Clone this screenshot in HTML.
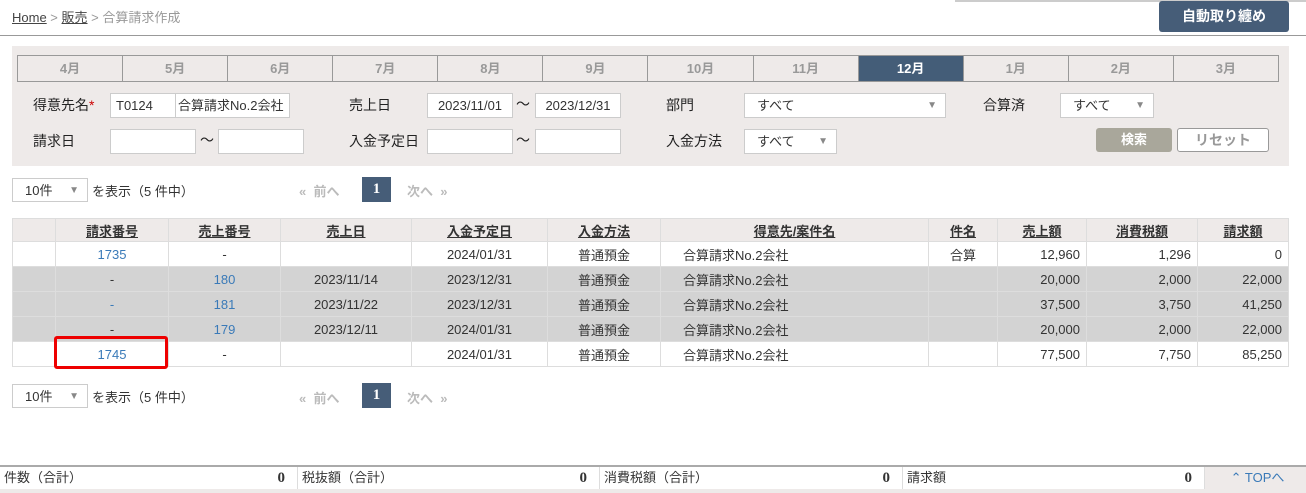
<!DOCTYPE html>
<html><head><meta charset="utf-8"><style>
*{box-sizing:border-box;margin:0;padding:0}
body{width:1306px;height:493px;overflow:hidden;background:#fff;font-family:"Liberation Sans","Noto Sans CJK JP",sans-serif;font-size:13px;color:#333;position:relative}
.a{position:absolute}
.bc{left:12px;top:7px;color:#999}
.bc u{color:#444}
.hl{left:0;top:35px;width:1306px;height:1px;background:#999}
.tl{left:955px;top:0;width:351px;height:2px;background:#ccc}
.btn1{left:1159px;top:1px;width:130px;height:31px;background:#465d78;color:#fff;border-radius:3px;font-weight:bold;font-size:14px;text-align:center;line-height:31px}
.panel{left:12px;top:46px;width:1277px;height:120px;background:#eeeae9}
.tabs{left:17px;top:55px;width:1262px;height:27px;display:flex;border:1px solid #999;background:#eeeae9}
.tabs div{flex:1;text-align:center;line-height:25px;color:#999;font-weight:bold;border-left:1px solid #999}
.tabs div:first-child{border-left:none}
.tabs .on{background:#445d78;color:#fff}
.lb{font-size:14px;color:#222}
.in{background:#fff;border:1px solid #ccc;height:25px;line-height:23px;padding-left:5px;font-size:13px}
.sel::after{content:"▼";position:absolute;right:8px;top:0;font-size:10px;color:#888}
.sel{padding-left:12px}
.b2{background:#a9a79b;color:#fff;border-radius:3px;text-align:center;font-weight:bold;line-height:24px}
.b3{background:#fff;border:1px solid #999;color:#999;border-radius:3px;text-align:center;font-weight:bold;line-height:22px;font-size:14px}
.pg span{position:absolute}
table{position:absolute;left:12px;top:218px;border-collapse:collapse;width:1277px}
td,th{border:1px solid #ddd;height:25px;font-size:13px;font-weight:normal;padding:0 6px}
th{background:#eeeae9;height:23px;text-decoration:underline;font-weight:bold;color:#333}
.c{text-align:center}.r{text-align:right}
tr.g td{background:#d3d3d3}
.lk{color:#3a7ab8}
.red{left:54px;top:336px;width:114px;height:33px;border:3px solid #e00;border-radius:3px}
.ft{left:0;top:465px;width:1306px;height:24px;border-top:2px solid #aaa;display:flex}
.ft div{position:relative;border-right:1px solid #ddd;height:22px;line-height:22px;padding-left:4px}
.ft b{position:absolute;right:12px;font-family:"Liberation Serif",serif;font-size:15px}
</style></head><body>
<div class="a tl"></div>
<div class="a bc"><u>Home</u> &gt; <u>販売</u> &gt; 合算請求作成</div>
<div class="a btn1">自動取り纏め</div>
<div class="a hl"></div>
<div class="a panel"></div>
<div class="a tabs"><div>4月</div><div>5月</div><div>6月</div><div>7月</div><div>8月</div><div>9月</div><div>10月</div><div>11月</div><div class="on">12月</div><div>1月</div><div>2月</div><div>3月</div></div>
<div class="a lb" style="left:33px;top:95px">得意先名<span style="color:#c00">*</span></div>
<div class="a in" style="left:110px;top:93px;width:66px">T0124</div>
<div class="a in" style="left:175px;top:93px;width:115px;padding-left:2px">合算請求No.2会社</div>
<div class="a lb" style="left:349px;top:95px">売上日</div>
<div class="a in c" style="left:427px;top:93px;width:86px;padding:0">2023/11/01</div>
<div class="a lb" style="left:516px;top:94px">～</div>
<div class="a in c" style="left:535px;top:93px;width:86px;padding:0">2023/12/31</div>
<div class="a lb" style="left:666px;top:95px">部門</div>
<div class="a in sel" style="left:744px;top:93px;width:202px">すべて</div>
<div class="a lb" style="left:983px;top:95px">合算済</div>
<div class="a in sel" style="left:1060px;top:93px;width:94px">すべて</div>
<div class="a lb" style="left:33px;top:131px">請求日</div>
<div class="a in" style="left:110px;top:129px;width:86px"></div>
<div class="a lb" style="left:200px;top:130px">～</div>
<div class="a in" style="left:218px;top:129px;width:86px"></div>
<div class="a lb" style="left:349px;top:131px">入金予定日</div>
<div class="a in" style="left:427px;top:129px;width:86px"></div>
<div class="a lb" style="left:516px;top:130px">～</div>
<div class="a in" style="left:535px;top:129px;width:86px"></div>
<div class="a lb" style="left:666px;top:131px">入金方法</div>
<div class="a in sel" style="left:744px;top:129px;width:93px">すべて</div>
<div class="a b2" style="left:1096px;top:128px;width:76px;height:24px">検索</div>
<div class="a b3" style="left:1177px;top:128px;width:92px;height:24px">リセット</div>

<div class="a in sel" style="left:12px;top:178px;width:76px;height:24px;padding-left:12px">10件</div>
<div class="a" style="left:92px;top:181px">を表示（5 件中）</div>
<div class="a" style="left:299px;top:181px;color:#bbb;font-weight:bold">«&nbsp;&nbsp;前へ</div>
<div class="a" style="left:362px;top:177px;width:29px;height:25px;background:#465d78;color:#fff;text-align:center;line-height:25px;font-weight:bold;font-family:'Liberation Serif',serif;font-size:15px">1</div>
<div class="a" style="left:407px;top:181px;color:#bbb;font-weight:bold">次へ&nbsp;&nbsp;»</div>

<table>
<tr><th style="width:43px"></th><th style="width:113px">請求番号</th><th style="width:112px">売上番号</th><th style="width:131px">売上日</th><th style="width:136px">入金予定日</th><th style="width:113px">入金方法</th><th style="width:268px">得意先/案件名</th><th style="width:69px">件名</th><th style="width:89px">売上額</th><th style="width:111px">消費税額</th><th>請求額</th></tr>
<tr><td></td><td class="c lk">1735</td><td class="c">-</td><td></td><td class="c">2024/01/31</td><td class="c">普通預金</td><td style="padding-left:22px">合算請求No.2会社</td><td class="c">合算</td><td class="r">12,960</td><td class="r">1,296</td><td class="r">0</td></tr>
<tr class="g"><td></td><td class="c">-</td><td class="c lk">180</td><td class="c">2023/11/14</td><td class="c">2023/12/31</td><td class="c">普通預金</td><td style="padding-left:22px">合算請求No.2会社</td><td></td><td class="r">20,000</td><td class="r">2,000</td><td class="r">22,000</td></tr>
<tr class="g"><td></td><td class="c lk">-</td><td class="c lk">181</td><td class="c">2023/11/22</td><td class="c">2023/12/31</td><td class="c">普通預金</td><td style="padding-left:22px">合算請求No.2会社</td><td></td><td class="r">37,500</td><td class="r">3,750</td><td class="r">41,250</td></tr>
<tr class="g"><td></td><td class="c">-</td><td class="c lk">179</td><td class="c">2023/12/11</td><td class="c">2024/01/31</td><td class="c">普通預金</td><td style="padding-left:22px">合算請求No.2会社</td><td></td><td class="r">20,000</td><td class="r">2,000</td><td class="r">22,000</td></tr>
<tr><td></td><td class="c lk">1745</td><td class="c">-</td><td></td><td class="c">2024/01/31</td><td class="c">普通預金</td><td style="padding-left:22px">合算請求No.2会社</td><td></td><td class="r">77,500</td><td class="r">7,750</td><td class="r">85,250</td></tr>
</table>
<div class="a red"></div>

<div class="a in sel" style="left:12px;top:384px;width:76px;height:24px;padding-left:12px">10件</div>
<div class="a" style="left:92px;top:387px">を表示（5 件中）</div>
<div class="a" style="left:299px;top:388px;color:#bbb;font-weight:bold">«&nbsp;&nbsp;前へ</div>
<div class="a" style="left:362px;top:383px;width:29px;height:25px;background:#465d78;color:#fff;text-align:center;line-height:25px;font-weight:bold;font-family:'Liberation Serif',serif;font-size:15px">1</div>
<div class="a" style="left:407px;top:388px;color:#bbb;font-weight:bold">次へ&nbsp;&nbsp;»</div>

<div class="a ft">
<div style="width:298px">件数（合計）<b>0</b></div>
<div style="width:302px">税抜額（合計）<b>0</b></div>
<div style="width:303px">消費税額（合計）<b>0</b></div>
<div style="width:302px">請求額<b>0</b></div>
<div style="flex:1;background:#eeeae9;color:#3a7ab8;text-align:center;border:none">⌃ TOPへ</div>
</div>
<div class="a" style="left:0;top:489px;width:1306px;height:4px;background:#eeeae9"></div>
</body></html>
